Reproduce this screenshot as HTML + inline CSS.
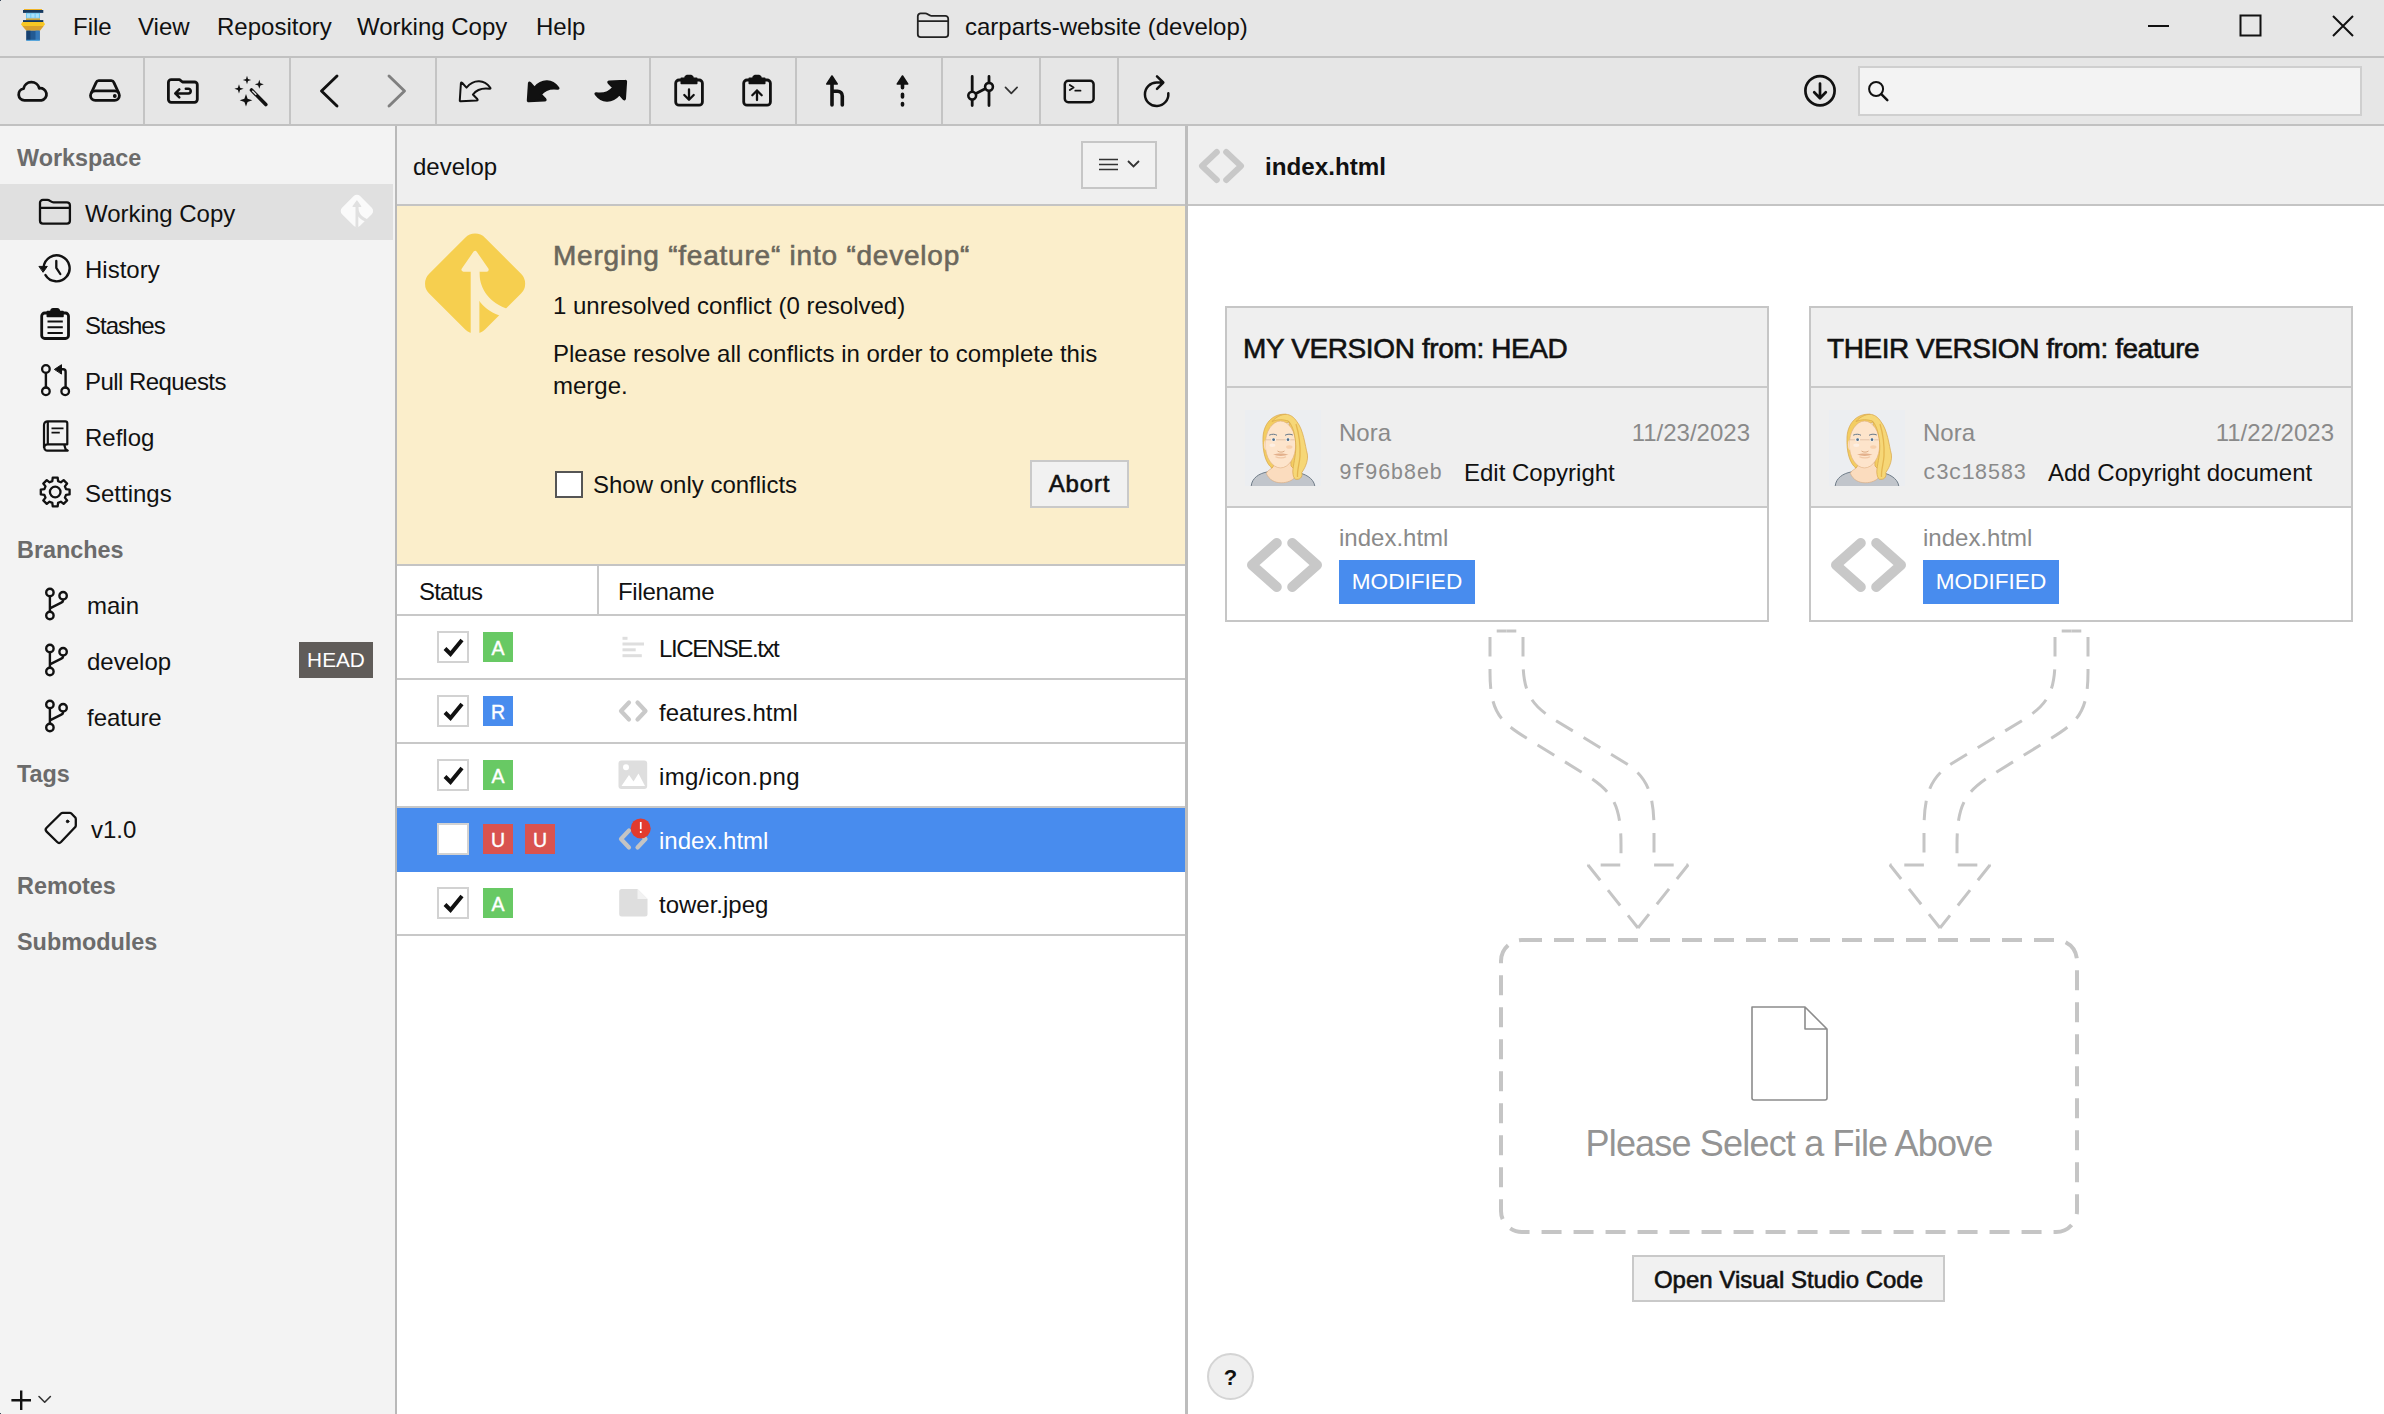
<!DOCTYPE html>
<html lang="en">
<head>
<meta charset="utf-8">
<title>carparts-website (develop)</title>
<style>
*{box-sizing:border-box;margin:0;padding:0}
html,body{width:2384px;height:1414px;overflow:hidden;background:#fff}
body{font-family:"Liberation Sans",sans-serif;font-size:24px;color:#111;position:relative;line-height:1}
.abs{position:absolute}
.sb{font-weight:400;-webkit-text-stroke:0.6px currentColor}
.t{position:absolute;white-space:nowrap;line-height:34px;height:34px}
svg{position:absolute;overflow:visible}
.ic{fill:none;stroke:#111;stroke-width:2.8;stroke-linecap:round;stroke-linejoin:round}
/* bars */
#titlebar{left:0;top:0;width:2384px;height:56px;background:#e6e6e6}
#tb-line{left:0;top:56px;width:2384px;height:2px;background:#c1c1c1}
#toolbar{left:0;top:58px;width:2384px;height:66px;background:#e6e6e6}
#tool-line{left:0;top:124px;width:2384px;height:2px;background:#c1c1c1}
.vsep{position:absolute;top:58px;width:2px;height:66px;background:#c4c4c4}
/* sidebar */
#sidebar{left:0;top:126px;width:395px;height:1288px;background:#f3f3f3}
#side-line{left:395px;top:126px;width:2px;height:1288px;background:#b9b9b9}
.sec{position:absolute;left:17px;font-weight:700;color:#6b6b6b;font-size:23.4px;line-height:34px;height:34px;white-space:nowrap}
.item{position:absolute;font-size:24px;line-height:34px;height:34px;white-space:nowrap}
/* middle */
#mid-head{left:397px;top:126px;width:788px;height:78px;background:#efefef}
#mid-head-line{left:397px;top:204px;width:788px;height:2px;background:#c4c4c4}
#banner{left:397px;top:206px;width:788px;height:358px;background:#fbeecb}
#banner-line{left:397px;top:564px;width:788px;height:2px;background:#c4c4c4}
#mid-line{left:1185px;top:126px;width:3px;height:1288px;background:#bdbdbd}
.hline{position:absolute;left:397px;width:788px;height:2px;background:#c8c8c8}
.cb{position:absolute;width:32px;height:32px;background:#fff;border:2px solid #d2d2d2}
.badge{position:absolute;width:30px;height:30px;color:#fff;font-size:19.500px;line-height:32px;text-align:center;-webkit-text-stroke:0.4px #fff}
.fname{position:absolute;left:659px;font-size:24px;line-height:34px;height:34px;white-space:nowrap}
/* right */
#right-head{left:1188px;top:126px;width:1196px;height:78px;background:#efefef}
#right-head-line{left:1188px;top:204px;width:1196px;height:2px;background:#c4c4c4}
.card{position:absolute;top:306px;width:544px;height:316px;border:2px solid #c6c6c6;background:#fff}
.card .h{position:absolute;left:0;top:0;width:540px;height:80px;background:#efefef;border-bottom:2px solid #c9c9c9}
.card .c{position:absolute;left:0;top:80px;width:540px;height:120px;background:#efefef;border-bottom:2px solid #c9c9c9}
.btn{position:absolute;background:#f1f1f1;border:2px solid #c9c9c9;text-align:center;font-size:24px}
</style>
</head>
<body>
<div class="abs" id="titlebar"></div>
<div class="abs" id="tb-line"></div>
<div class="abs" id="toolbar"></div>
<div class="abs" id="tool-line"></div>
<div class="abs" id="sidebar"></div>
<div class="abs" id="side-line"></div>
<div class="abs" id="mid-head"></div>
<div class="abs" id="mid-head-line"></div>
<div class="abs" id="banner"></div>
<div class="abs" id="banner-line"></div>
<div class="abs" id="mid-line"></div>
<div class="abs" id="right-head"></div>
<div class="abs" id="right-head-line"></div>
<!--TITLEBAR-->
<div class="abs" style="left:0;top:0;width:1px;height:1px;background:#3c4a5c"></div><div class="abs" style="left:0;top:1413px;width:1px;height:1px;background:#3c4a5c"></div>
<svg style="left:20px;top:8px" width="26" height="34" viewBox="20 8 26 34">
<rect x="24" y="9" width="18" height="1.200" fill="#f0b323"/>
<rect x="23" y="10" width="20.300" height="2.900" fill="#16395f"/>
<rect x="26" y="12.900" width="14" height="5.500" fill="#6ec6f0"/>
<rect x="27" y="13.700" width="3.300" height="4" fill="#a8e0fa"/><rect x="31.300" y="13.700" width="3.300" height="4" fill="#a8e0fa"/><rect x="35.600" y="13.700" width="3.300" height="4" fill="#a8e0fa"/>
<rect x="26" y="18.400" width="14" height="1.700" fill="#c9a43a"/>
<rect x="23" y="20.100" width="20.300" height="2" fill="#16395f"/>
<path d="M22.500 22.100 H43.700 L45 24.200 L43.700 26 H22.300 L21 24.200 Z" fill="#f7c724"/>
<path d="M22.300 26 H43.700 L40 30.700 H26.400 Z" fill="#d9a02c"/>
<rect x="26.400" y="30.700" width="13.300" height="9.600" fill="#225a93"/>
<rect x="26.400" y="30.700" width="4" height="9.600" fill="#17406e"/>
<rect x="35.500" y="30.700" width="4.200" height="9.600" fill="#3478b8"/>
<rect x="26.400" y="39.800" width="13.300" height="1" fill="#4aa3e0"/>
</svg>
<div class="t" style="left:73px;top:9.500px">File</div>
<div class="t" style="left:138px;top:9.500px">View</div>
<div class="t" style="left:217px;top:9.500px">Repository</div>
<div class="t" style="left:357px;top:9.500px">Working Copy</div>
<div class="t" style="left:536px;top:9.500px">Help</div>
<div class="t" style="left:965px;top:9.500px">carparts-website (develop)</div>
<svg style="left:0;top:0" width="1000" height="56" viewBox="0 0 1000 56"><g transform="translate(877.800 -186.500)"><path d="M40 203.300 V220.800 A2.900 2.900 0 0 0 42.900 223.700 H67.500 A2.900 2.900 0 0 0 70.400 220.800 V205.200 A2.900 2.900 0 0 0 67.500 202.300 H53.500 C50.800 202.300 50 199.900 47.300 199.900 H42.900 A2.900 2.900 0 0 0 40 202.800 Z M40 207.600 H70.400" fill="none" stroke="#222" stroke-width="1.800" stroke-linejoin="round"/></g></svg>
<svg style="left:2148px;top:24px" width="22" height="4"><rect x="0" y="1" width="21" height="2" fill="#111"/></svg>
<svg style="left:2239px;top:14px" width="24" height="24"><rect x="1.5" y="1.5" width="20" height="20" fill="none" stroke="#111" stroke-width="2"/></svg>
<svg style="left:2332px;top:15px" width="24" height="24"><path d="M1 1 L21 21 M21 1 L1 21" fill="none" stroke="#111" stroke-width="2"/></svg>

<!--TOOLBAR-->
<div class="vsep" style="left:143px"></div><div class="vsep" style="left:289px"></div><div class="vsep" style="left:435px"></div><div class="vsep" style="left:649px"></div><div class="vsep" style="left:795px"></div><div class="vsep" style="left:941px"></div><div class="vsep" style="left:1039px"></div><div class="vsep" style="left:1117px"></div>
<svg style="left:0;top:58px" width="2384" height="66" viewBox="0 58 2384 66">
<!-- tower logo is in titlebar svg -->
<g class="ic">
<path d="M24.4 100.3 A5.900 5.900 0 0 1 23.5 88.600 A8.100 8.100 0 0 1 39.3 88.300 A6.100 6.100 0 1 1 41.5 100.300 Z"/>
<rect x="90.5" y="90.800" width="28.9" height="9.600" rx="4.800"/>
<path d="M91.500 92.500 L96.2 82.300 A2.700 2.700 0 0 1 98.700 80.600 H111.300 A2.700 2.700 0 0 1 113.800 82.300 L118.500 92.500"/>
<circle cx="114.8" cy="96" r="1.300" fill="#111" stroke-width="1.200"/>
<path d="M168.400 82.500 V99.500 A2.800 2.800 0 0 0 171.200 102.300 H194.500 A2.800 2.800 0 0 0 197.300 99.500 V84.800 A2.800 2.800 0 0 0 194.500 82 H182.500 L179.500 79.600 H171.200 A2.800 2.800 0 0 0 168.400 82.400 Z"/>
<path d="M185.800 88.700 H188.400 A2.350 2.350 0 0 1 188.400 93.400 H175.300 M179.300 89.400 L175.300 93.400 L179.300 97.400" stroke-width="2.500"/>
<path d="M337 76 L321.500 91 L337 106" stroke-width="2.900"/>
<path d="M389 76 L404.500 91 L389 106" stroke-width="2.900" stroke="#808080"/>
<path d="M460.9 83.3 L459.8 100.2 Q459.7 101.4 460.9 101.3 L476.6 100.5 Q478.3 100.300 477.3 99 L472.9 94.5 C476 90.5 482 87.8 489.6 88.8 Q491.2 88.7 490 87.4 C484.5 80.2 474.5 78.3 466.5 87.6 L462.3 83 Q461.100 81.9 460.9 83.3 Z" stroke-width="2"/>
<g transform="translate(68 0)"><path d="M460.9 83.3 L459.8 100.2 Q459.7 101.4 460.9 101.3 L476.6 100.5 Q478.3 100.300 477.3 99 L472.9 94.5 C476 90.5 482 87.8 489.6 88.8 Q491.2 88.7 490 87.4 C484.5 80.2 474.5 78.3 466.5 87.6 L462.3 83 Q461.100 81.9 460.9 83.3 Z" stroke-width="2" fill="#111"/></g>
<g transform="translate(1153.900 182) rotate(180) "><path d="M460.9 83.3 L459.8 100.2 Q459.7 101.4 460.9 101.3 L476.6 100.5 Q478.3 100.300 477.3 99 L472.9 94.5 C476 90.5 482 87.8 489.6 88.8 Q491.2 88.7 490 87.4 C484.5 80.2 474.5 78.3 466.5 87.6 L462.3 83 Q461.100 81.9 460.9 83.3 Z" stroke-width="2" fill="#111" transform="translate(68 0)"/></g>
<rect x="675.700" y="80" width="26.700" height="25.200" rx="3.300"/>
<path d="M681.300 78.300 H684.800 A3 3 0 0 1 687 75.600 H691 A3 3 0 0 1 693.200 78.300 H696.700 V83.400 H681.300 Z" fill="#111" stroke-width="1.600"/>
<path d="M689 89.500 V99.500 M684.300 95 L689 99.700 L693.700 95" stroke-width="2.300"/>
<rect x="743.700" y="80" width="26.700" height="25.200" rx="3.300"/>
<path d="M749.300 78.300 H752.800 A3 3 0 0 1 755 75.600 H759 A3 3 0 0 1 761.200 78.300 H764.700 V83.400 H749.300 Z" fill="#111" stroke-width="1.600"/>
<path d="M757 100 V90.500 M752.300 95.200 L757 90.500 L761.700 95.200" stroke-width="2.300"/>
<path d="M832 76 L826.800 84 H837.200 Z" fill="#111" stroke-width="1.600"/>
<path d="M832 84 V105 M832 91.200 H837.500 A4.800 4.800 0 0 1 842.300 96 V105" stroke-width="3.600"/>
<path d="M902.500 76 L897.300 84 H907.700 Z" fill="#111" stroke-width="1.600"/>
<path d="M902.500 84 V87.800 M902.500 94.300 V97 M902.500 103.500 V105" stroke-width="3.600"/>
<path d="M972.200 76.500 V105.500 M989 76.500 V105.500 M972.200 95.600 L989 86.800" stroke-width="2.800"/>
<circle cx="972.200" cy="95.600" r="3.900" fill="#e6e6e6" stroke-width="2.600"/>
<circle cx="989" cy="86.800" r="3.900" fill="#e6e6e6" stroke-width="2.600"/>
<path d="M1005.500 87.300 L1011.300 93.300 L1017.100 87.300" stroke-width="1.700" stroke="#333"/>
<rect x="1064.800" y="80.800" width="28.800" height="21.400" rx="3.500" stroke-width="2.500"/>
<path d="M1069.800 85 L1073.600 87.500 L1069.800 90 M1075.300 90.700 H1080.500" stroke-width="1.800"/>
<path d="M1168.300 93.300 A11.700 11.700 0 1 1 1157 82.600 H1163 M1157 76.300 L1163.300 82.500 L1157 88.800" stroke-width="2.500"/>
<circle cx="1820" cy="90.700" r="14.600" stroke-width="2.700"/>
<path d="M1820 83.500 V98 M1814.200 92.300 L1820 98.200 L1825.800 92.300" stroke-width="2.700"/>
</g>
<g fill="#111">
<path d="M247 75.800 l1 3.200 l3.200 1 l-3.200 1 l-1 3.200 l-1 -3.200 l-3.200 -1 l3.200 -1 Z"/>
<path d="M259.300 79.800 l1.100 3.400 l3.400 1.100 l-3.400 1.100 l-1.100 3.400 l-1.100 -3.400 l-3.400 -1.100 l3.400 -1.100 Z"/>
<path d="M239 84.200 l1.100 3.500 l3.500 1.100 l-3.500 1.100 l-1.100 3.500 l-1.100 -3.500 l-3.500 -1.100 l3.500 -1.100 Z"/>
<path d="M246 94 l1.600 4.700 l4.700 1.600 l-4.700 1.600 l-1.600 4.700 l-1.600 -4.700 l-4.700 -1.600 l4.700 -1.600 Z"/>
</g>
<path d="M251.500 90 L265.800 104.500" stroke="#111" stroke-width="3.600" stroke-linecap="round" fill="none"/>
<path d="M252.300 90.800 L256.300 94.800" stroke="#e6e6e6" stroke-width="1.300" stroke-linecap="butt" fill="none"/>
</svg>
<div class="abs" style="left:1858px;top:66px;width:504px;height:50px;background:#f3f3f3;border:2px solid #cfcfcf"></div>
<svg style="left:1866px;top:78px" width="26" height="26" viewBox="1866 78 26 26"><circle cx="1876.100" cy="89" r="7" fill="none" stroke="#111" stroke-width="2"/><path d="M1881.300 94.200 L1887.300 100.200" stroke="#111" stroke-width="2.500" stroke-linecap="round"/></svg>
<!--SIDEBAR-->
<div class="abs" style="left:0;top:184px;width:393px;height:56px;background:#e0e0e0"></div>
<div class="sec" style="top:141px">Workspace</div>
<div class="item" style="left:85px;top:197px">Working Copy</div>
<div class="item" style="left:85px;top:253px">History</div>
<div class="item" style="left:85px;top:309px;letter-spacing:-1.0px">Stashes</div>
<div class="item" style="left:85px;top:365px;letter-spacing:-0.550px">Pull Requests</div>
<div class="item" style="left:85px;top:421px">Reflog</div>
<div class="item" style="left:85px;top:477px">Settings</div>
<div class="sec" style="top:533px">Branches</div>
<div class="item" style="left:87px;top:589px">main</div>
<div class="item" style="left:87px;top:645px">develop</div>
<div class="item" style="left:87px;top:701px">feature</div>
<div class="sec" style="top:757px">Tags</div>
<div class="item" style="left:91px;top:813px">v1.0</div>
<div class="sec" style="top:869px">Remotes</div>
<div class="sec" style="top:925px">Submodules</div>
<div class="abs" style="left:299px;top:642px;width:74px;height:36px;background:#605c59;color:#fff;font-size:20.800px;line-height:36px;text-align:center">HEAD</div>

<svg style="left:0;top:126px" width="395" height="1288" viewBox="0 126 395 1288">
<g class="ic" stroke-width="2.500">
<path d="M40 203.300 V220.800 A2.900 2.900 0 0 0 42.900 223.700 H67 A2.900 2.900 0 0 0 69.900 220.800 V205.200 A2.900 2.900 0 0 0 67 202.300 H53.500 C50.800 202.300 50 199.900 47.300 199.900 H42.900 A2.900 2.900 0 0 0 40 202.800 Z M40 207.800 H69.900" stroke-width="2.300"/>
<path d="M43.650 267.200 A13 13 0 1 1 45.500 275.100" stroke-width="2.400"/>
<path d="M39.300 266.400 H47.300 L43.300 272 Z" fill="#111" stroke-width="1"/>
<path d="M56.300 261 V267.800 L60.300 274" stroke-width="2.300"/>
<rect x="41.700" y="313" width="26.800" height="25.500" rx="3" stroke-width="2.800"/>
<path d="M47.300 311.500 H50.800 A2.800 2.800 0 0 1 53.300 308.700 H57 A2.800 2.800 0 0 1 59.500 311.500 H63 V316.600 H47.300 Z" fill="#111" stroke-width="1.500"/>
<path d="M47.500 321.500 H62.800 M47.500 327.300 H62.800 M47.500 333 H62.800" stroke-width="2" stroke-linecap="butt"/>
<path d="M45.900 373 V387.500 M65.600 387.500 V371.800 A2.500 2.500 0 0 0 63.100 369.300 H60" stroke-width="2.400"/>
<path d="M54.700 369.200 L61.500 364.700 V373.700 Z" fill="#111" stroke-width="1"/>
<circle cx="45.900" cy="369" r="3.800" stroke-width="2.300"/><circle cx="45.900" cy="391.300" r="3.800" stroke-width="2.300"/><circle cx="65.200" cy="391.300" r="3.800" stroke-width="2.300"/>
<path d="M67.300 444.300 V423.300 A2 2 0 0 0 65.300 421.300 H47.600 A3.600 3.600 0 0 0 44 424.900 V447.500 M67.300 444.300 H47.400 A3.100 3.100 0 0 0 47.400 450.600 H67.800 L65.600 449.200 L64.200 444.600 M47.800 421.500 V444.200" stroke-width="2.200"/>
<path d="M51.500 428.300 H63.500 M51.500 432.600 H59.800" stroke-width="1.800" stroke-linecap="butt"/>
<path d="M66.02 489.12 L69.59 489.53 L69.59 494.47 L66.02 494.88 L64.89 497.62 L67.12 500.43 L63.63 503.92 L60.82 501.69 L58.08 502.82 L57.67 506.39 L52.73 506.39 L52.32 502.82 L49.58 501.69 L46.77 503.92 L43.28 500.43 L45.51 497.62 L44.38 494.88 L40.81 494.47 L40.81 489.53 L44.38 489.12 L45.51 486.38 L43.28 483.57 L46.77 480.08 L49.58 482.31 L52.32 481.18 L52.73 477.61 L57.67 477.61 L58.08 481.18 L60.82 482.31 L63.63 480.08 L67.12 483.57 L64.89 486.38 Z" stroke-width="2.300"/>
<circle cx="55.200" cy="492" r="5.300" stroke-width="2.300"/>
<path d="M49.900 596.2 V611.8 M63 599.5 V600.7 Q62.800 602.0 61.300 602.7 L49.900 608.3" stroke-width="2.400"/><circle cx="49.900" cy="592.5" r="3.700" fill="#f3f3f3" stroke-width="2.400"/><circle cx="63.100" cy="595.7" r="3.700" fill="#f3f3f3" stroke-width="2.400"/><circle cx="49.900" cy="615.5" r="3.700" fill="#f3f3f3" stroke-width="2.400"/><path d="M49.900 652.2 V667.8 M63 655.5 V656.7 Q62.800 658.0 61.300 658.7 L49.900 664.3" stroke-width="2.400"/><circle cx="49.900" cy="648.5" r="3.700" fill="#f3f3f3" stroke-width="2.400"/><circle cx="63.100" cy="651.7" r="3.700" fill="#f3f3f3" stroke-width="2.400"/><circle cx="49.900" cy="671.5" r="3.700" fill="#f3f3f3" stroke-width="2.400"/><path d="M49.900 708.2 V723.8 M63 711.5 V712.7 Q62.800 714.0 61.300 714.7 L49.900 720.3" stroke-width="2.400"/><circle cx="49.900" cy="704.5" r="3.700" fill="#f3f3f3" stroke-width="2.400"/><circle cx="63.100" cy="707.7" r="3.700" fill="#f3f3f3" stroke-width="2.400"/><circle cx="49.900" cy="727.5" r="3.700" fill="#f3f3f3" stroke-width="2.400"/>
<path d="M62.800 812.800 H69.600 A2.500 2.500 0 0 1 71.400 813.500 L75 817.200 A2.500 2.500 0 0 1 75.800 819 V825.500 A2.500 2.500 0 0 1 75 827.300 L61 842 A2.700 2.700 0 0 1 57.200 842 L46.600 831.600 A2.700 2.700 0 0 1 46.600 827.800 L61 813.500 A2.500 2.500 0 0 1 62.800 812.800 Z" stroke-width="2.300"/>
<circle cx="67.600" cy="821.400" r="1.300" fill="#111" stroke-width="1"/>
<path d="M11.400 1400.200 H31 M21.200 1390.500 V1410" stroke-width="2.400" stroke-linecap="butt"/>
<path d="M39 1396.500 L44.700 1402.200 L50.400 1396.500" stroke-width="1.600" stroke="#333"/>
</g>
<g transform="translate(340.700 194.900) scale(0.3235)">
<rect x="-39.500" y="-39.500" width="79" height="79" rx="14" transform="translate(50.100 49.650) rotate(45)" fill="#fafafa"/>
<path d="M50.100 18.900 L38.500 35.700 H61.700 Z" fill="#e0e0e0" stroke="#e0e0e0" stroke-width="4" stroke-linejoin="round"/>
<rect x="45.700" y="35" width="8.700" height="66" fill="#e0e0e0"/>
<path d="M53 37.700 H54.350 C54.500 52.200 61 66.200 80.700 74.200 L86 76.500 L79 84 L73.900 81.300 C65 78.200 58 72.200 54.350 67 H53 Z" fill="#e0e0e0"/>
</g>
</svg>
<!--MIDDLE-->
<div class="t" style="left:413px;top:150px">develop</div>
<div class="abs" style="left:1081px;top:141px;width:76px;height:48px;border:2px solid #c6c6c6;background:#f1f1f1"></div>
<svg style="left:1099px;top:156px" width="44" height="18"><path d="M0 3.5H19M0 8.5H19M0 13.5H19" stroke="#333" stroke-width="1.6" fill="none"/><path d="M29 5 L34.5 10.5 L40 5" stroke="#333" stroke-width="1.8" fill="none"/></svg>
<svg id="mergeicon" style="left:425px;top:233.750px" width="102" height="102" viewBox="0 0 102 102">
<rect x="-39.500" y="-39.500" width="79" height="79" rx="14" transform="translate(50.100 49.650) rotate(45)" fill="#f6cf4f"/>
<path d="M50.100 18.900 L38.500 35.700 H61.700 Z" fill="#fbeecb" stroke="#fbeecb" stroke-width="4" stroke-linejoin="round"/>
<rect x="45.700" y="35" width="8.700" height="66" fill="#fbeecb"/>
<path d="M53 37.700 H54.350 C54.500 52.200 61 66.200 80.700 74.200 L86 76.500 L79 84 L73.900 81.300 C65 78.200 58 72.200 54.350 67 H53 Z" fill="#fbeecb"/>
</svg>
<div class="t sb" style="left:553px;top:239px;font-size:28px;letter-spacing:0.78px;color:#6b675c">Merging “feature“ into “develop“</div>
<div class="t" style="left:553px;top:289px">1 unresolved conflict (0 resolved)</div>
<div class="t" style="left:553px;top:337px">Please resolve all conflicts in order to complete this</div>
<div class="t" style="left:553px;top:369px">merge.</div>
<div class="abs" style="left:555px;top:471px;width:28px;height:27px;border:2px solid #555;background:#fff"></div>
<div class="t" style="left:593px;top:468px">Show only conflicts</div>
<div class="btn sb" style="left:1030px;top:460px;width:99px;height:48px;line-height:44px;font-size:24px;letter-spacing:0.8px">Abort</div>
<div class="t" style="left:419px;top:575px;letter-spacing:-0.8px">Status</div>
<div class="abs" style="left:597px;top:566px;width:2px;height:48px;background:#c8c8c8"></div>
<div class="t" style="left:618px;top:575px;letter-spacing:-0.3px">Filename</div>
<div class="hline" style="top:614px"></div>
<div class="hline" style="top:678px"></div>
<div class="hline" style="top:742px"></div>
<div class="hline" style="top:934px"></div>
<div class="hline" style="top:806px"></div>
<div class="abs" style="left:397px;top:808px;width:788px;height:64px;background:#488cee"></div>
<div class="cb" style="left:437px;top:631px"></div><svg style="left:443px;top:637.5px" width="22" height="20"><path d="M2 10.5 L7.5 16 L19 2" fill="none" stroke="#111" stroke-width="4"/></svg>
<div class="badge" style="left:483px;top:632px;background:#68c964">A</div>
<div class="fname" style="top:632px;letter-spacing:-1.4px">LICENSE.txt</div>
<div class="cb" style="left:437px;top:695px"></div><svg style="left:443px;top:701.5px" width="22" height="20"><path d="M2 10.5 L7.5 16 L19 2" fill="none" stroke="#111" stroke-width="4"/></svg>
<div class="badge" style="left:483px;top:696px;background:#488cee">R</div>
<div class="fname" style="top:696px">features.html</div>
<div class="cb" style="left:437px;top:759px"></div><svg style="left:443px;top:765.5px" width="22" height="20"><path d="M2 10.5 L7.5 16 L19 2" fill="none" stroke="#111" stroke-width="4"/></svg>
<div class="badge" style="left:483px;top:760px;background:#68c964">A</div>
<div class="fname" style="top:760px;letter-spacing:0.4px">img/icon.png</div>
<div class="cb" style="left:437px;top:823px"></div>
<div class="badge" style="left:483px;top:824px;background:#d9534f">U</div>
<div class="badge" style="left:525px;top:824px;background:#d9534f">U</div>
<div class="fname" style="top:824px;color:#fff">index.html</div>
<div class="cb" style="left:437px;top:887px"></div><svg style="left:443px;top:893.5px" width="22" height="20"><path d="M2 10.5 L7.5 16 L19 2" fill="none" stroke="#111" stroke-width="4"/></svg>
<div class="badge" style="left:483px;top:888px;background:#68c964">A</div>
<div class="fname" style="top:888px">tower.jpeg</div>

<svg style="left:397px;top:616px" width="788" height="320" viewBox="397 616 788 320">
<g fill="#dedede"><rect x="622.500" y="636.800" width="5" height="3"/><rect x="622.500" y="642.500" width="21.500" height="3"/><rect x="622.500" y="648.300" width="13.200" height="3"/><rect x="622.500" y="654.200" width="19.300" height="3"/></g>
<path d="M629 702.500 L621 711 L629 719.500 M637.500 702.500 L645.500 711 L637.500 719.500" fill="none" stroke="#c9c9c9" stroke-width="4.200" stroke-linecap="round" stroke-linejoin="round"/>
<rect x="618.500" y="760.500" width="28.700" height="28.500" rx="3" fill="#dedede"/>
<circle cx="626" cy="767.200" r="3" fill="#fff"/>
<path d="M621.500 786 L629 775 L633.500 781.500 L638.500 773.500 L645 786 Z" fill="#fff"/>
<path d="M629 830.500 L621 839 L629 847.500 M637.500 830.500 L645.500 839 L637.500 847.500" fill="none" stroke="#c4c4c4" stroke-width="4.200" stroke-linecap="round" stroke-linejoin="round"/>
<circle cx="640.700" cy="828.400" r="10" fill="#e23b2e"/>
<rect x="639.900" y="822" width="1.700" height="7.200" fill="#fff"/><rect x="639.900" y="831" width="1.700" height="2" fill="#fff"/>
<path d="M621.700 889 H637.500 L647.500 899 V914 A2.500 2.500 0 0 1 645 916.500 H621.700 A2.500 2.500 0 0 1 619.200 914 V891.500 A2.500 2.500 0 0 1 621.700 889 Z" fill="#dedede"/>
<path d="M637.500 889 V899 H647.500 Z" fill="#f2f2f2"/>
</svg>
<!--RIGHT-->

<svg style="left:1198px;top:148px" width="47" height="36" viewBox="0 0 47 36"><path d="M18.8 4.0 L4.0 18.0 L18.8 32.0 M28.2 4.0 L43.0 18.0 L28.2 32.0" fill="none" stroke="#c8c8c8" stroke-width="6" stroke-linecap="round" stroke-linejoin="round"/></svg>
<div class="t" style="left:1265px;top:150px;font-weight:700;font-size:24.2px">index.html</div>
<div class="card" style="left:1225px"><div class="h"></div><div class="c"></div></div>
<div class="t sb" style="left:1243px;top:332px;font-size:28px;letter-spacing:-0.38px">MY VERSION from: HEAD</div>
<div class="t" style="left:1339px;top:416px;color:#8a8a8a">Nora</div>
<div class="t" style="left:1550px;top:416px;width:200px;text-align:right;color:#8a8a8a">11/23/2023</div>
<div class="t" style="left:1339px;top:456px;color:#8a8a8a;font-family:'Liberation Mono',monospace;font-size:21.5px">9f96b8eb</div>
<div class="t" style="left:1464px;top:456px">Edit Copyright</div>
<div class="t" style="left:1339px;top:521px;color:#8a8a8a">index.html</div>
<div class="abs" style="left:1339px;top:560px;width:136px;height:44px;background:#488cee;color:#fff;font-size:22.6px;line-height:44px;text-align:center">MODIFIED</div>
<svg style="left:1246px;top:537px" width="77" height="56" viewBox="0 0 77 56"><path d="M30.8 6.0 L6.0 28.0 L30.8 50.0 M46.2 6.0 L71.0 28.0 L46.2 50.0" fill="none" stroke="#c8c8c8" stroke-width="10" stroke-linecap="round" stroke-linejoin="round"/></svg>
<div class="card" style="left:1809px"><div class="h"></div><div class="c"></div></div>
<div class="t sb" style="left:1827px;top:332px;font-size:28px;letter-spacing:-0.45px">THEIR VERSION from: feature</div>
<div class="t" style="left:1923px;top:416px;color:#8a8a8a">Nora</div>
<div class="t" style="left:2134px;top:416px;width:200px;text-align:right;color:#8a8a8a">11/22/2023</div>
<div class="t" style="left:1923px;top:456px;color:#8a8a8a;font-family:'Liberation Mono',monospace;font-size:21.5px">c3c18583</div>
<div class="t" style="left:2048px;top:456px">Add Copyright document</div>
<div class="t" style="left:1923px;top:521px;color:#8a8a8a">index.html</div>
<div class="abs" style="left:1923px;top:560px;width:136px;height:44px;background:#488cee;color:#fff;font-size:22.6px;line-height:44px;text-align:center">MODIFIED</div>
<svg style="left:1830px;top:537px" width="77" height="56" viewBox="0 0 77 56"><path d="M30.8 6.0 L6.0 28.0 L30.8 50.0 M46.2 6.0 L71.0 28.0 L46.2 50.0" fill="none" stroke="#c8c8c8" stroke-width="10" stroke-linecap="round" stroke-linejoin="round"/></svg>
<svg style="left:1188px;top:620px" width="1196" height="640" viewBox="1188 620 1196 640">
<g fill="none" stroke="#c5c5c5" stroke-width="3" stroke-linejoin="bevel" stroke-dasharray="19.6 12.6" stroke-dashoffset="9.8"><path d="M1506.5 631 H1490 V672 C1490 712,1500 722,1528 739 L1583 773 C1612 791,1621 803,1621 845 V865 H1588 L1638 928"/><path d="M1506.5 631 H1523 V660 C1523 695,1533 706,1555 720 L1627 764 C1648 778,1654 795,1654 830 V865 H1688 L1638 928"/></g>
<g fill="none" stroke="#c5c5c5" stroke-width="3" stroke-linejoin="bevel" stroke-dasharray="19.6 12.6" stroke-dashoffset="9.8" transform="translate(3578 0) scale(-1 1)"><path d="M1506.5 631 H1490 V672 C1490 712,1500 722,1528 739 L1583 773 C1612 791,1621 803,1621 845 V865 H1588 L1638 928"/><path d="M1506.5 631 H1523 V660 C1523 695,1533 706,1555 720 L1627 764 C1648 778,1654 795,1654 830 V865 H1688 L1638 928"/></g>
<rect x="1501" y="940" width="576" height="292" rx="21" ry="21" fill="none" stroke="#c5c5c5" stroke-width="4" stroke-dasharray="20 12"/>
<path d="M1752 1007 H1805 L1827 1029 V1098 a2 2 0 0 1 -2 2 H1754 a2 2 0 0 1 -2 -2 Z M1805 1007 V1029 H1827" fill="#fff" stroke="#8c8c8c" stroke-width="1.6" stroke-linejoin="round"/>
</svg>
<div class="t" style="left:1500px;top:1124px;width:578px;text-align:center;font-size:36px;letter-spacing:-0.82px;color:#949494;line-height:40px;height:40px">Please Select a File Above</div>
<div class="btn sb" style="left:1632px;top:1255px;width:313px;height:47px;line-height:45px;font-size:24px">Open Visual Studio Code</div>
<div class="abs" style="left:1207px;top:1353px;width:47px;height:47px;border-radius:50%;background:#efefef;border:2px solid #d4d4d4;text-align:center;line-height:45px;font-weight:700;font-size:22px">?</div>

<svg class="av" style="overflow:hidden;left:1245px;top:409.500px" width="76" height="76" viewBox="0 0 76 76">
<rect width="76" height="76" fill="#eceef1"/>
<path d="M6.200 78 V76 C7 68 14 63.500 22 62 L50 62 C60 63.500 68.500 68 69.800 76 V78 Z" fill="#c1c5cb" stroke="#6f7c88" stroke-width="1"/>
<path d="M26 54 L26.500 58.500 C24 60 22 61.500 21.300 63.300 C24 70 30 72.800 36.200 72.800 C42 72.800 47.500 70.500 49.800 67.500 L48.500 52 Z" fill="#fbdcbe" stroke="#d9a97c" stroke-width=".6"/>
<path d="M41 4.300 C30 3.300 19 11 18 27 C17.400 42 20.500 53 27 58.200 L31 52 L29.500 18 L44 12 L52 14 L54 40 L50 60 L46 56 L44 12 Z" fill="#f3cd62" stroke="#d8a548" stroke-width=".7"/>
<ellipse cx="35.500" cy="34.500" rx="15.200" ry="23.400" fill="#fde4cb" stroke="#dfae82" stroke-width=".6"/>
<path d="M20.500 30 C18.300 30 18.300 40 21 40 Z" fill="#fbdcbe"/>
<path d="M41 4.300 C36 4.500 31 7 27 11.500 C33 9 38 9.500 43.500 11 C48 16 50.500 26 50.800 36 C51 46 47.800 56 47.800 62 C48 66 49 68.500 50.500 69.200 C54.500 70 58 67.500 56.800 62.500 C61.500 56 63.200 49 62.300 44 C60 35 58.500 20 52 11.800 C49 7 45 4.500 41 4.300 Z" fill="#f6d777" stroke="#d8a548" stroke-width=".7"/>
<path d="M51 14 C54 24 55.500 36 55 46 C54.500 54 52 60 52.500 67" fill="none" stroke="#e5b650" stroke-width="1.300"/>
<path d="M24.200 25.200 C27 23.800 30 24 32 25.300 M40 25.300 C42.500 23.800 45.500 24 47.800 25" fill="none" stroke="#66788a" stroke-width="1"/>
<path d="M21 29.800 H49.500" stroke="#c9a58a" stroke-width=".5"/>
<ellipse cx="28.600" cy="29.700" rx="2.300" ry="1.600" fill="#fff"/><ellipse cx="43" cy="29.700" rx="2.300" ry="1.600" fill="#fff"/>
<circle cx="28.600" cy="29.700" r="1.400" fill="#4f6c86"/><circle cx="43" cy="29.700" r="1.400" fill="#4f6c86"/>
<ellipse cx="27.300" cy="35.300" rx="3" ry="1.700" fill="#feefe2"/>
<ellipse cx="44.300" cy="37" rx="3.200" ry="1.800" fill="#f8d0ad"/>
<path d="M32.500 41 C34 42.500 38 42.500 39.500 41" fill="none" stroke="#d7a47a" stroke-width=".9"/>
<path d="M28 44.600 C32 43 39 43 43.500 44.600 C39 46.500 32.500 46.500 28 44.600 Z" fill="#e3b08b"/>
<path d="M30.500 46.800 C33.500 48.300 38.500 48.300 41 46.800" fill="none" stroke="#f0c7a5" stroke-width="1.200"/>
</svg>
<svg class="av" style="overflow:hidden;left:1829px;top:409.500px" width="76" height="76" viewBox="0 0 76 76">
<rect width="76" height="76" fill="#eceef1"/>
<path d="M6.200 78 V76 C7 68 14 63.500 22 62 L50 62 C60 63.500 68.500 68 69.800 76 V78 Z" fill="#c1c5cb" stroke="#6f7c88" stroke-width="1"/>
<path d="M26 54 L26.500 58.500 C24 60 22 61.500 21.300 63.300 C24 70 30 72.800 36.200 72.800 C42 72.800 47.500 70.500 49.800 67.500 L48.500 52 Z" fill="#fbdcbe" stroke="#d9a97c" stroke-width=".6"/>
<path d="M41 4.300 C30 3.300 19 11 18 27 C17.400 42 20.500 53 27 58.200 L31 52 L29.500 18 L44 12 L52 14 L54 40 L50 60 L46 56 L44 12 Z" fill="#f3cd62" stroke="#d8a548" stroke-width=".7"/>
<ellipse cx="35.500" cy="34.500" rx="15.200" ry="23.400" fill="#fde4cb" stroke="#dfae82" stroke-width=".6"/>
<path d="M20.500 30 C18.300 30 18.300 40 21 40 Z" fill="#fbdcbe"/>
<path d="M41 4.300 C36 4.500 31 7 27 11.500 C33 9 38 9.500 43.500 11 C48 16 50.500 26 50.800 36 C51 46 47.800 56 47.800 62 C48 66 49 68.500 50.500 69.200 C54.500 70 58 67.500 56.800 62.500 C61.500 56 63.200 49 62.300 44 C60 35 58.500 20 52 11.800 C49 7 45 4.500 41 4.300 Z" fill="#f6d777" stroke="#d8a548" stroke-width=".7"/>
<path d="M51 14 C54 24 55.500 36 55 46 C54.500 54 52 60 52.500 67" fill="none" stroke="#e5b650" stroke-width="1.300"/>
<path d="M24.200 25.200 C27 23.800 30 24 32 25.300 M40 25.300 C42.500 23.800 45.500 24 47.800 25" fill="none" stroke="#66788a" stroke-width="1"/>
<path d="M21 29.800 H49.500" stroke="#c9a58a" stroke-width=".5"/>
<ellipse cx="28.600" cy="29.700" rx="2.300" ry="1.600" fill="#fff"/><ellipse cx="43" cy="29.700" rx="2.300" ry="1.600" fill="#fff"/>
<circle cx="28.600" cy="29.700" r="1.400" fill="#4f6c86"/><circle cx="43" cy="29.700" r="1.400" fill="#4f6c86"/>
<ellipse cx="27.300" cy="35.300" rx="3" ry="1.700" fill="#feefe2"/>
<ellipse cx="44.300" cy="37" rx="3.200" ry="1.800" fill="#f8d0ad"/>
<path d="M32.500 41 C34 42.500 38 42.500 39.500 41" fill="none" stroke="#d7a47a" stroke-width=".9"/>
<path d="M28 44.600 C32 43 39 43 43.500 44.600 C39 46.500 32.500 46.500 28 44.600 Z" fill="#e3b08b"/>
<path d="M30.500 46.800 C33.500 48.300 38.500 48.300 41 46.800" fill="none" stroke="#f0c7a5" stroke-width="1.200"/>
</svg>
</body>
</html>
